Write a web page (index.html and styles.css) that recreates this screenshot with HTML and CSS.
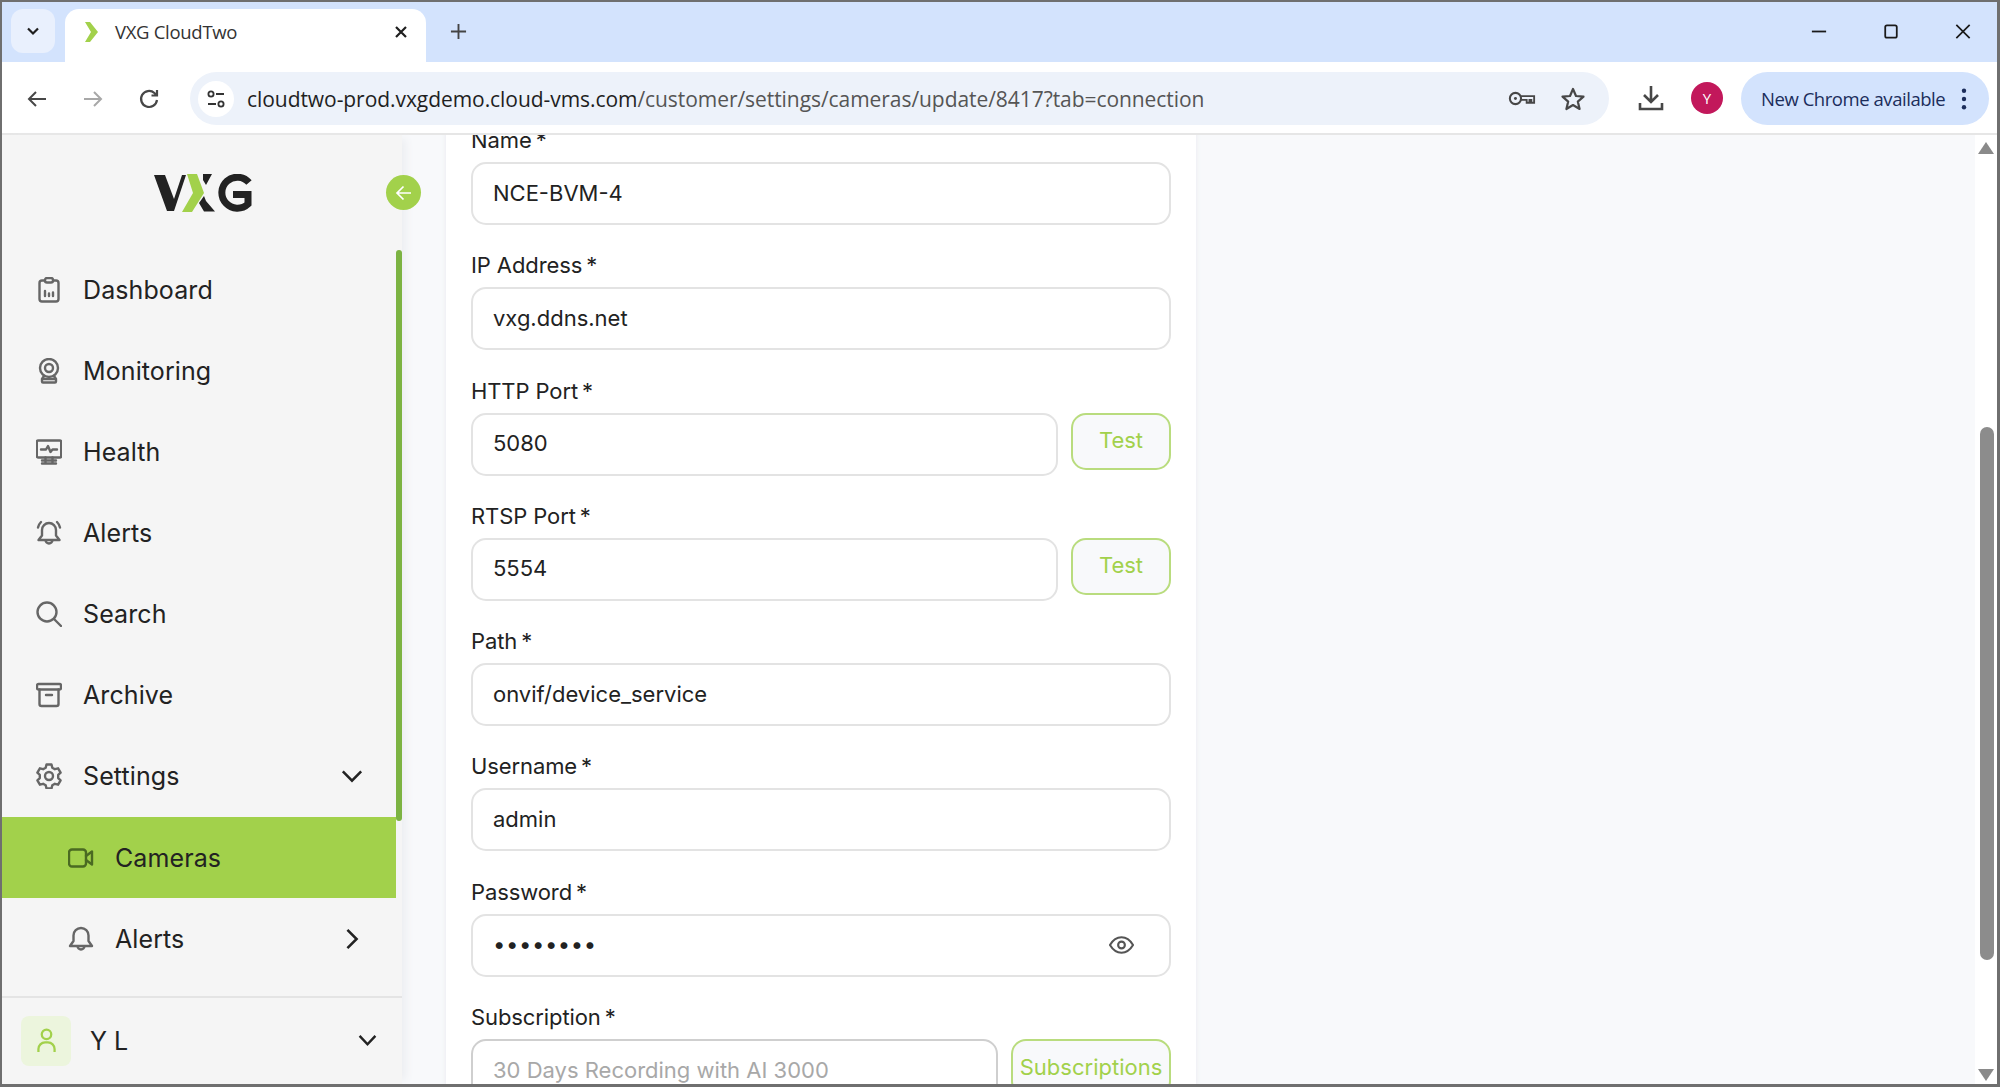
FILE: index.html
```html
<!DOCTYPE html>
<html lang="en">
<head>
<meta charset="utf-8">
<title>VXG CloudTwo</title>
<link rel="stylesheet" href="styles.css">
</head>
<body>
<div class="window">
  <header class="tabstrip">
    <button class="tab-menu" aria-label="Tabs"><svg class="ic18" viewBox="0 0 18 18"><path d="M4 6.500l5 5 5-5" fill="none" stroke="#1f1f1f" stroke-width="2.200"/></svg></button>
    <div class="tab">
      <svg class="favicon" viewBox="0 0 15 22"><path d="M1 1h5l8 10-8 10H1l6-10z" fill="#a2d14b"/></svg>
      <span class="tab-title">VXG CloudTwo</span>
      <svg class="tab-close" viewBox="0 0 14 14"><path d="M2 2l10 10M12 2L2 12" stroke="#1f1f1f" stroke-width="2.200"/></svg>
    </div>
    <svg class="tab-new" viewBox="0 0 18 18"><path d="M9 1v16M1 9h16" stroke="#444" stroke-width="2"/></svg>
    <div class="win-controls">
      <svg class="win-ic" viewBox="0 0 18 18"><path d="M1 9h16" stroke="#1a1a1a" stroke-width="2"/></svg>
      <svg class="win-ic" viewBox="0 0 18 18"><rect x="2.500" y="2" width="13" height="14" rx="2" fill="none" stroke="#1a1a1a" stroke-width="2"/></svg>
      <svg class="win-ic" viewBox="0 0 18 18"><path d="M1.500 1.500l15 15M16.500 1.500l-15 15" stroke="#1a1a1a" stroke-width="1.900"/></svg>
    </div>
  </header>
  <div class="toolbar">
    <div class="nav-buttons">
      <svg class="tool-ic" viewBox="0 0 24 24"><path d="M21 12H4M11 5l-7 7 7 7" fill="none" stroke="#474747" stroke-width="2"/></svg>
      <svg class="tool-ic" viewBox="0 0 24 24"><path d="M3 12h17M13 5l7 7-7 7" fill="none" stroke="#a8a8a8" stroke-width="2"/></svg>
      <svg class="tool-ic" viewBox="0 0 24 24"><path d="M20 13a8 8 0 1 1-2.600-7L20 8.500M20 3v5.500h-5.500" fill="none" stroke="#474747" stroke-width="2.200"/></svg>
    </div>
    <div class="omnibox">
      <span class="site-info"><svg class="ic22" viewBox="0 0 22 22"><circle cx="6" cy="6" r="2.600" fill="none" stroke="#333" stroke-width="1.800"/><path d="M11 6h8M3 16h8" stroke="#333" stroke-width="1.800"/><circle cx="16" cy="16" r="2.600" fill="none" stroke="#333" stroke-width="1.800"/></svg></span>
      <span class="url"><span class="url-host">cloudtwo-prod.vxgdemo.cloud-vms.com</span>/customer/settings/cameras/update/8417?tab=connection</span>
      <svg class="key-ic" viewBox="0 0 30 20"><circle cx="8" cy="10" r="6" fill="none" stroke="#474747" stroke-width="2.200"/><circle cx="8" cy="10" r="1.600" fill="#474747"/><path d="M14 7.500h14v7h-3v-3h-2v3h-3v-3h-6" fill="none" stroke="#474747" stroke-width="2"/></svg>
      <svg class="star-ic" viewBox="0 0 26 26"><path d="M13 3l3 7 7.500.6-5.700 5 1.800 7.400L13 19l-6.600 4 1.800-7.400-5.700-5L10 10z" fill="none" stroke="#474747" stroke-width="2.200" stroke-linejoin="round"/></svg>
    </div>
    <svg class="dl-ic" viewBox="0 0 26 26"><path d="M13 1v15M6 10l7 7 7-7M2 18v6h22v-6" fill="none" stroke="#474747" stroke-width="2.600"/></svg>
    <span class="avatar">Y</span>
    <div class="update-pill">
      <span class="update-text">New Chrome available</span>
      <svg class="dots" viewBox="0 0 6 24"><circle cx="3" cy="3" r="2.400"/><circle cx="3" cy="12" r="2.400"/><circle cx="3" cy="21" r="2.400"/></svg>
    </div>
  </div>
  <div class="app">
    <aside class="sidebar">
      <div class="logo-row">
        <svg class="logo" viewBox="0 0 98 38" role="img" aria-label="VXG">
          <path d="M0 1h11l9 24L28 1h4L20 37h-7z" fill="#222"/>
          <path d="M33 0h10l7 19-12 19H28l11-19z" fill="#a2d14b"/>
          <path d="M49 0h9l-6 11-3-5zM52 27l-2-5-5 7 5 8.500h11z" fill="#222"/>
          <path d="M95 8.500A15.500 15.500 0 1 0 94 30V20.500H79" fill="none" stroke="#222" stroke-width="7"/>
        </svg>
        <button class="collapse" aria-label="Collapse"><svg class="ic18" viewBox="0 0 18 18"><path d="M16 9H2M8.500 2.500L2 9l6.500 6.500" fill="none" stroke="#fff" stroke-width="1.700"/></svg></button>
      </div>
      <nav class="nav">
        <span class="nav-thumb"></span>
        <a class="nav-item"><svg class="nav-ic" viewBox="0 0 26 26"><rect x="3.500" y="3.500" width="19" height="21" rx="2.500" fill="none"/><rect x="9" y="1" width="8" height="4.500" rx="2" fill="#f5f5f5"/><path d="M9 19v-5M13 19v-2.500M17 19v-3.500" fill="none"/></svg><span>Dashboard</span></a>
        <a class="nav-item"><svg class="nav-ic" viewBox="0 0 26 26"><circle cx="13" cy="10" r="9" fill="none"/><circle cx="13" cy="10" r="4" fill="none"/><path d="M8 18l-2 3v2.500a1 1 0 0 0 1 1h12a1 1 0 0 0 1-1V21l-2-3M6 21h14" fill="none"/></svg><span>Monitoring</span></a>
        <a class="nav-item"><svg class="nav-ic" viewBox="0 0 26 26"><rect x=".8" y="1.500" width="24.400" height="17" rx="1.500" fill="none"/><path d="M5 10.500h5l2-3.500 2.500 6 2-2.500h4.500M9.500 18.500v6M16.500 18.500v6M6 24.500h14M6 21.500h14" fill="none"/></svg><span>Health</span></a>
        <a class="nav-item"><svg class="nav-ic" viewBox="0 0 26 26"><path d="M13 3a7 7 0 0 0-7 7v5.500L2.500 20h21L20 15.500V10a7 7 0 0 0-7-7zM9.500 20a3.500 3.500 0 0 0 7 0M2 7.500C2.500 5 3.500 3.500 5 2M24 7.500C23.500 5 22.500 3.500 21 2" fill="none"/></svg><span>Alerts</span></a>
        <a class="nav-item"><svg class="nav-ic" viewBox="0 0 26 26"><circle cx="11" cy="11" r="9.500" fill="none"/><path d="M18 18l7 7" fill="none"/></svg><span>Search</span></a>
        <a class="nav-item"><svg class="nav-ic" viewBox="0 0 26 26"><rect x="1" y="2" width="24" height="5.500" rx="1.500" fill="none"/><path d="M3.500 7.500V22a2 2 0 0 0 2 2h15a2 2 0 0 0 2-2V7.500M10 13h6" fill="none"/></svg><span>Archive</span></a>
        <a class="nav-item"><svg class="nav-ic" viewBox="0 0 26 26"><circle cx="13" cy="13" r="4" fill="none"/><path d="M10.500 1.500h5l.8 3.200 2.600 1.500 3.200-.9 2.500 4.300-2.400 2.300v3.200l2.400 2.300-2.500 4.300-3.200-.9-2.600 1.500-.8 3.200h-5l-.8-3.200-2.600-1.500-3.200.9-2.500-4.300 2.400-2.300v-3.200L1.400 9.600l2.500-4.300 3.200.9 2.600-1.500z" fill="none"/></svg><span>Settings</span><svg class="chev" viewBox="0 0 24 24"><path d="M2 7l10 10L22 7" fill="none" stroke="#222" stroke-width="2.800"/></svg></a>
        <a class="nav-item sub active"><svg class="nav-ic dark" viewBox="0 0 26 26"><rect x="1" y="4.500" width="17" height="17" rx="3" fill="none"/><path d="M18 11l6-4.500v13L18 15" fill="none"/></svg><span>Cameras</span></a>
        <a class="nav-item sub"><svg class="nav-ic" viewBox="0 0 26 26"><path d="M13 2a7.500 7.500 0 0 0-7.500 7.500V15L2 20h22l-3.500-5V9.500A7.500 7.500 0 0 0 13 2zM9.500 20a3.500 3.500 0 0 0 7 0" fill="none"/></svg><span>Alerts</span><svg class="chev" viewBox="0 0 24 24"><path d="M7 2l10 10L7 22" fill="none" stroke="#222" stroke-width="2.800"/></svg></a>
      </nav>
      <div class="user">
        <span class="user-badge"><svg class="user-ic" viewBox="0 0 20 26"><circle cx="10" cy="6.500" r="5" fill="none" stroke="#a2d14b" stroke-width="2.400"/><path d="M1.500 25v-3a7 7 0 0 1 7-7h3a7 7 0 0 1 7 7v3" fill="none" stroke="#a2d14b" stroke-width="2.400"/></svg></span>
        <span class="user-name">Y L</span>
        <svg class="user-chev" viewBox="0 0 20 14"><path d="M1.500 2l8.500 9 8.500-9" fill="none" stroke="#222" stroke-width="2.600"/></svg>
      </div>
    </aside>
    <main class="main">
      <form class="card">
        <div class="field"><label class="label">Name<i>*</i></label><input class="input" value="NCE-BVM-4" readonly></div>
        <div class="field"><label class="label">IP Address<i>*</i></label><input class="input" value="vxg.ddns.net" readonly></div>
        <div class="field"><label class="label">HTTP Port<i>*</i></label><div class="row"><input class="input" value="5080" readonly><button type="button" class="btn">Test</button></div></div>
        <div class="field"><label class="label">RTSP Port<i>*</i></label><div class="row"><input class="input" value="5554" readonly><button type="button" class="btn">Test</button></div></div>
        <div class="field"><label class="label">Path<i>*</i></label><input class="input" value="onvif/device_service" readonly></div>
        <div class="field"><label class="label">Username<i>*</i></label><input class="input" value="admin" readonly></div>
        <div class="field"><label class="label">Password<i>*</i></label><div class="pw"><input class="input pw-input" type="password" value="12345678" readonly><svg class="eye" viewBox="0 0 26 20"><path d="M1 10c3-5 7-8 12-8s9 3 12 8c-3 5-7 8-12 8S4 15 1 10z" fill="none" stroke="#555" stroke-width="2.200"/><circle cx="13" cy="10" r="3.500" fill="none" stroke="#555" stroke-width="2.200"/></svg></div></div>
        <div class="field"><label class="label">Subscription<i>*</i></label><div class="row"><input class="input muted" value="30 Days Recording with AI 3000" readonly><button type="button" class="btn wide">Subscriptions</button></div></div>
      </form>
    </main>
    <div class="page-scroll">
      <svg class="sb-arrow" viewBox="0 0 16 12"><path d="M8 0l8 12H0z" fill="#8a8a8a"/></svg>
      <div class="sb-track"><span class="sb-thumb"></span></div>
      <svg class="sb-arrow" viewBox="0 0 16 12"><path d="M8 12L0 0h16z" fill="#8a8a8a"/></svg>
    </div>
  </div>
</div>
</body>
</html>
```
FILE: styles.css
```css
* { box-sizing: border-box; }
html, body { margin: 0; height: 100%; overflow: hidden; }
body { background: #fff; font-family: Inter, "Liberation Sans", sans-serif; color: #222; }
svg { display: block; flex: none; }
button { font: inherit; }

.window { height: 1087px; display: flex; flex-direction: column; border: solid #6f6f6f; border-width: 2px 3px 3px 2px; overflow: hidden; }
.ic18 { width: 18px; height: 18px; }
.ic22 { width: 22px; height: 22px; }

.tabstrip { height: 60px; flex: none; background: #d3e3fd; display: flex; align-items: flex-start; padding: 7px 0 0 9px; }
.tab-menu { width: 44px; height: 44px; border: 0; border-radius: 12px; background: #e9f0fd; display: flex; align-items: center; justify-content: center; padding: 0; }
.tab { width: 361px; height: 53px; margin-left: 10px; background: #fff; border-radius: 14px 14px 0 0; display: flex; align-items: center; padding: 0 18px 8px 19px; }
.favicon { width: 15px; height: 22px; }
.tab-title { margin-left: 16px; font: 18.500px "Open Sans", sans-serif; color: #333; letter-spacing: -.3px; flex: 1; }
.tab-close { width: 14px; height: 14px; }
.tab-new { width: 17px; height: 17px; margin: 14px 0 0 24px; }
.win-controls { margin-left: auto; padding: 14px 26px 0 0; display: flex; gap: 56px; }
.win-ic { width: 16px; height: 17px; }

.toolbar { height: 73px; flex: none; background: #fff; border-bottom: 2px solid #e6e6e6; border-radius: 12px 12px 0 0; display: flex; align-items: flex-start; padding-top: 10px; }
.nav-buttons { width: 188px; padding: 15px 0 0 23px; display: flex; gap: 32px; }
.tool-ic { width: 24px; height: 24px; }
.omnibox { width: 1419px; height: 53px; background: #edf2fa; border-radius: 27px; display: flex; align-items: center; padding: 0 23px 0 8px; }
.site-info { width: 36px; height: 36px; border-radius: 50%; background: #fff; display: flex; align-items: center; justify-content: center; flex: none; }
.url { margin-left: 13px; flex: 1; font: 21px "Open Sans", sans-serif; color: #555; letter-spacing: -.06px; white-space: nowrap; }
.url-host { color: #1f1f1f; }
.key-ic { width: 28px; height: 19px; }
.star-ic { width: 26px; height: 26px; margin-left: 24px; }
.dl-ic { width: 26px; height: 26px; margin: 13px 0 0 29px; }
.avatar { width: 32px; height: 32px; margin: 10px 0 0 27px; border-radius: 50%; background: #c2185b; color: #fff; font: 15px "Open Sans", sans-serif; display: flex; align-items: center; justify-content: center; }
.update-pill { width: 248px; height: 53px; margin-left: 18px; background: #d3e3fd; border-radius: 27px; display: flex; align-items: center; padding-left: 20px; }
.update-text { font: 18.500px "Open Sans", sans-serif; color: #1b2d5b; letter-spacing: -.45px; white-space: nowrap; }
.dots { width: 6px; height: 22px; margin-left: 16px; fill: #1b2d5b; }

.app { flex: 1; min-height: 0; display: flex; background: #f8f9fb; }
.sidebar { width: 400px; flex: none; background: #f5f5f5; display: flex; flex-direction: column; position: relative; z-index: 1; box-shadow: 8px 0 8px -4px #eceef1; }
.logo-row { height: 114px; flex: none; display: flex; align-items: center; padding: 2px 0 0 152px; position: relative; }
.logo { width: 98px; height: 38px; }
.collapse { position: absolute; left: 384px; top: 40px; width: 35px; height: 35px; border: 0; border-radius: 50%; background: #a2d14b; display: flex; align-items: center; justify-content: center; padding: 0; }
.nav { flex: 1; position: relative; padding-right: 6px; }
.nav-thumb { position: absolute; right: 0; top: 1px; width: 6px; height: 571px; background: #7cb342; border-radius: 3px; }
.nav-item { height: 81.150px; display: flex; align-items: center; padding: 0 33px 0 34px; gap: 21px; font-size: 25px; letter-spacing: .1px; color: #222; }
.nav-item.sub { padding-left: 66px; }
.nav-item.active { background: #a2d14b; }
.nav-ic { width: 26px; height: 26px; stroke: #666; stroke-width: 2.400; stroke-linejoin: round; stroke-linecap: round; }
.nav-ic.dark { stroke: #4a6a22; }
.chev { width: 22px; height: 22px; margin-left: auto; }
.user { height: 88px; flex: none; border-top: 2px solid #e4e4e4; display: flex; align-items: center; padding: 0 25px 1px 19px; }
.user-badge { width: 50px; height: 50px; border-radius: 8px; background: #ecf5dd; display: flex; align-items: center; justify-content: center; }
.user-ic { width: 19px; height: 25px; }
.user-name { margin-left: 19px; font-size: 25px; }
.user-chev { width: 19px; height: 13px; margin-left: auto; }

.main { flex: 1; min-width: 0; overflow: hidden; padding-left: 44px; }
.card { width: 750px; margin-top: -12px; background: #fff; box-shadow: 0 0 5px #e8eaee; padding: 0 25px 40px 25px; display: flex; flex-direction: column; gap: 23.300px; }
.field { display: flex; flex-direction: column; gap: 9px; }
.label { height: 30px; font-size: 22px; line-height: 34px; color: #222; letter-spacing: -.1px; }
.label i { font-style: normal; margin-left: 4px; }
.input { display: block; width: 100%; height: 63px; border: 2px solid #e3e3e3; border-radius: 15px; background: #fff; padding: 0 20px 2px; font: 22px Inter, sans-serif; color: #222; outline: 0; min-width: 0; }
.input.muted { color: #a8a8a8; border-color: #cfcfcf; }
.row { display: flex; gap: 13px; align-items: flex-start; }
.btn { flex: none; width: 100px; height: 57px; border: 2px solid #b9dc7e; border-radius: 15px; background: #f8f9fb; color: #a2d14b; font-size: 22px; padding: 0 0 2px; }
.btn.wide { width: 160px; }
.pw { position: relative; }
.pw-input { letter-spacing: .6px; }
.eye { position: absolute; right: 37px; top: 21px; width: 25px; height: 20px; }

.page-scroll { width: 22px; flex: none; background: #fff; display: flex; flex-direction: column; align-items: center; padding: 7px 0 3px; }
.sb-arrow { width: 16px; height: 12px; }
.sb-track { flex: 1; position: relative; width: 100%; }
.sb-thumb { position: absolute; left: 5px; top: 273px; width: 14px; height: 533px; border-radius: 7px; background: #8c8c8c; }
```
